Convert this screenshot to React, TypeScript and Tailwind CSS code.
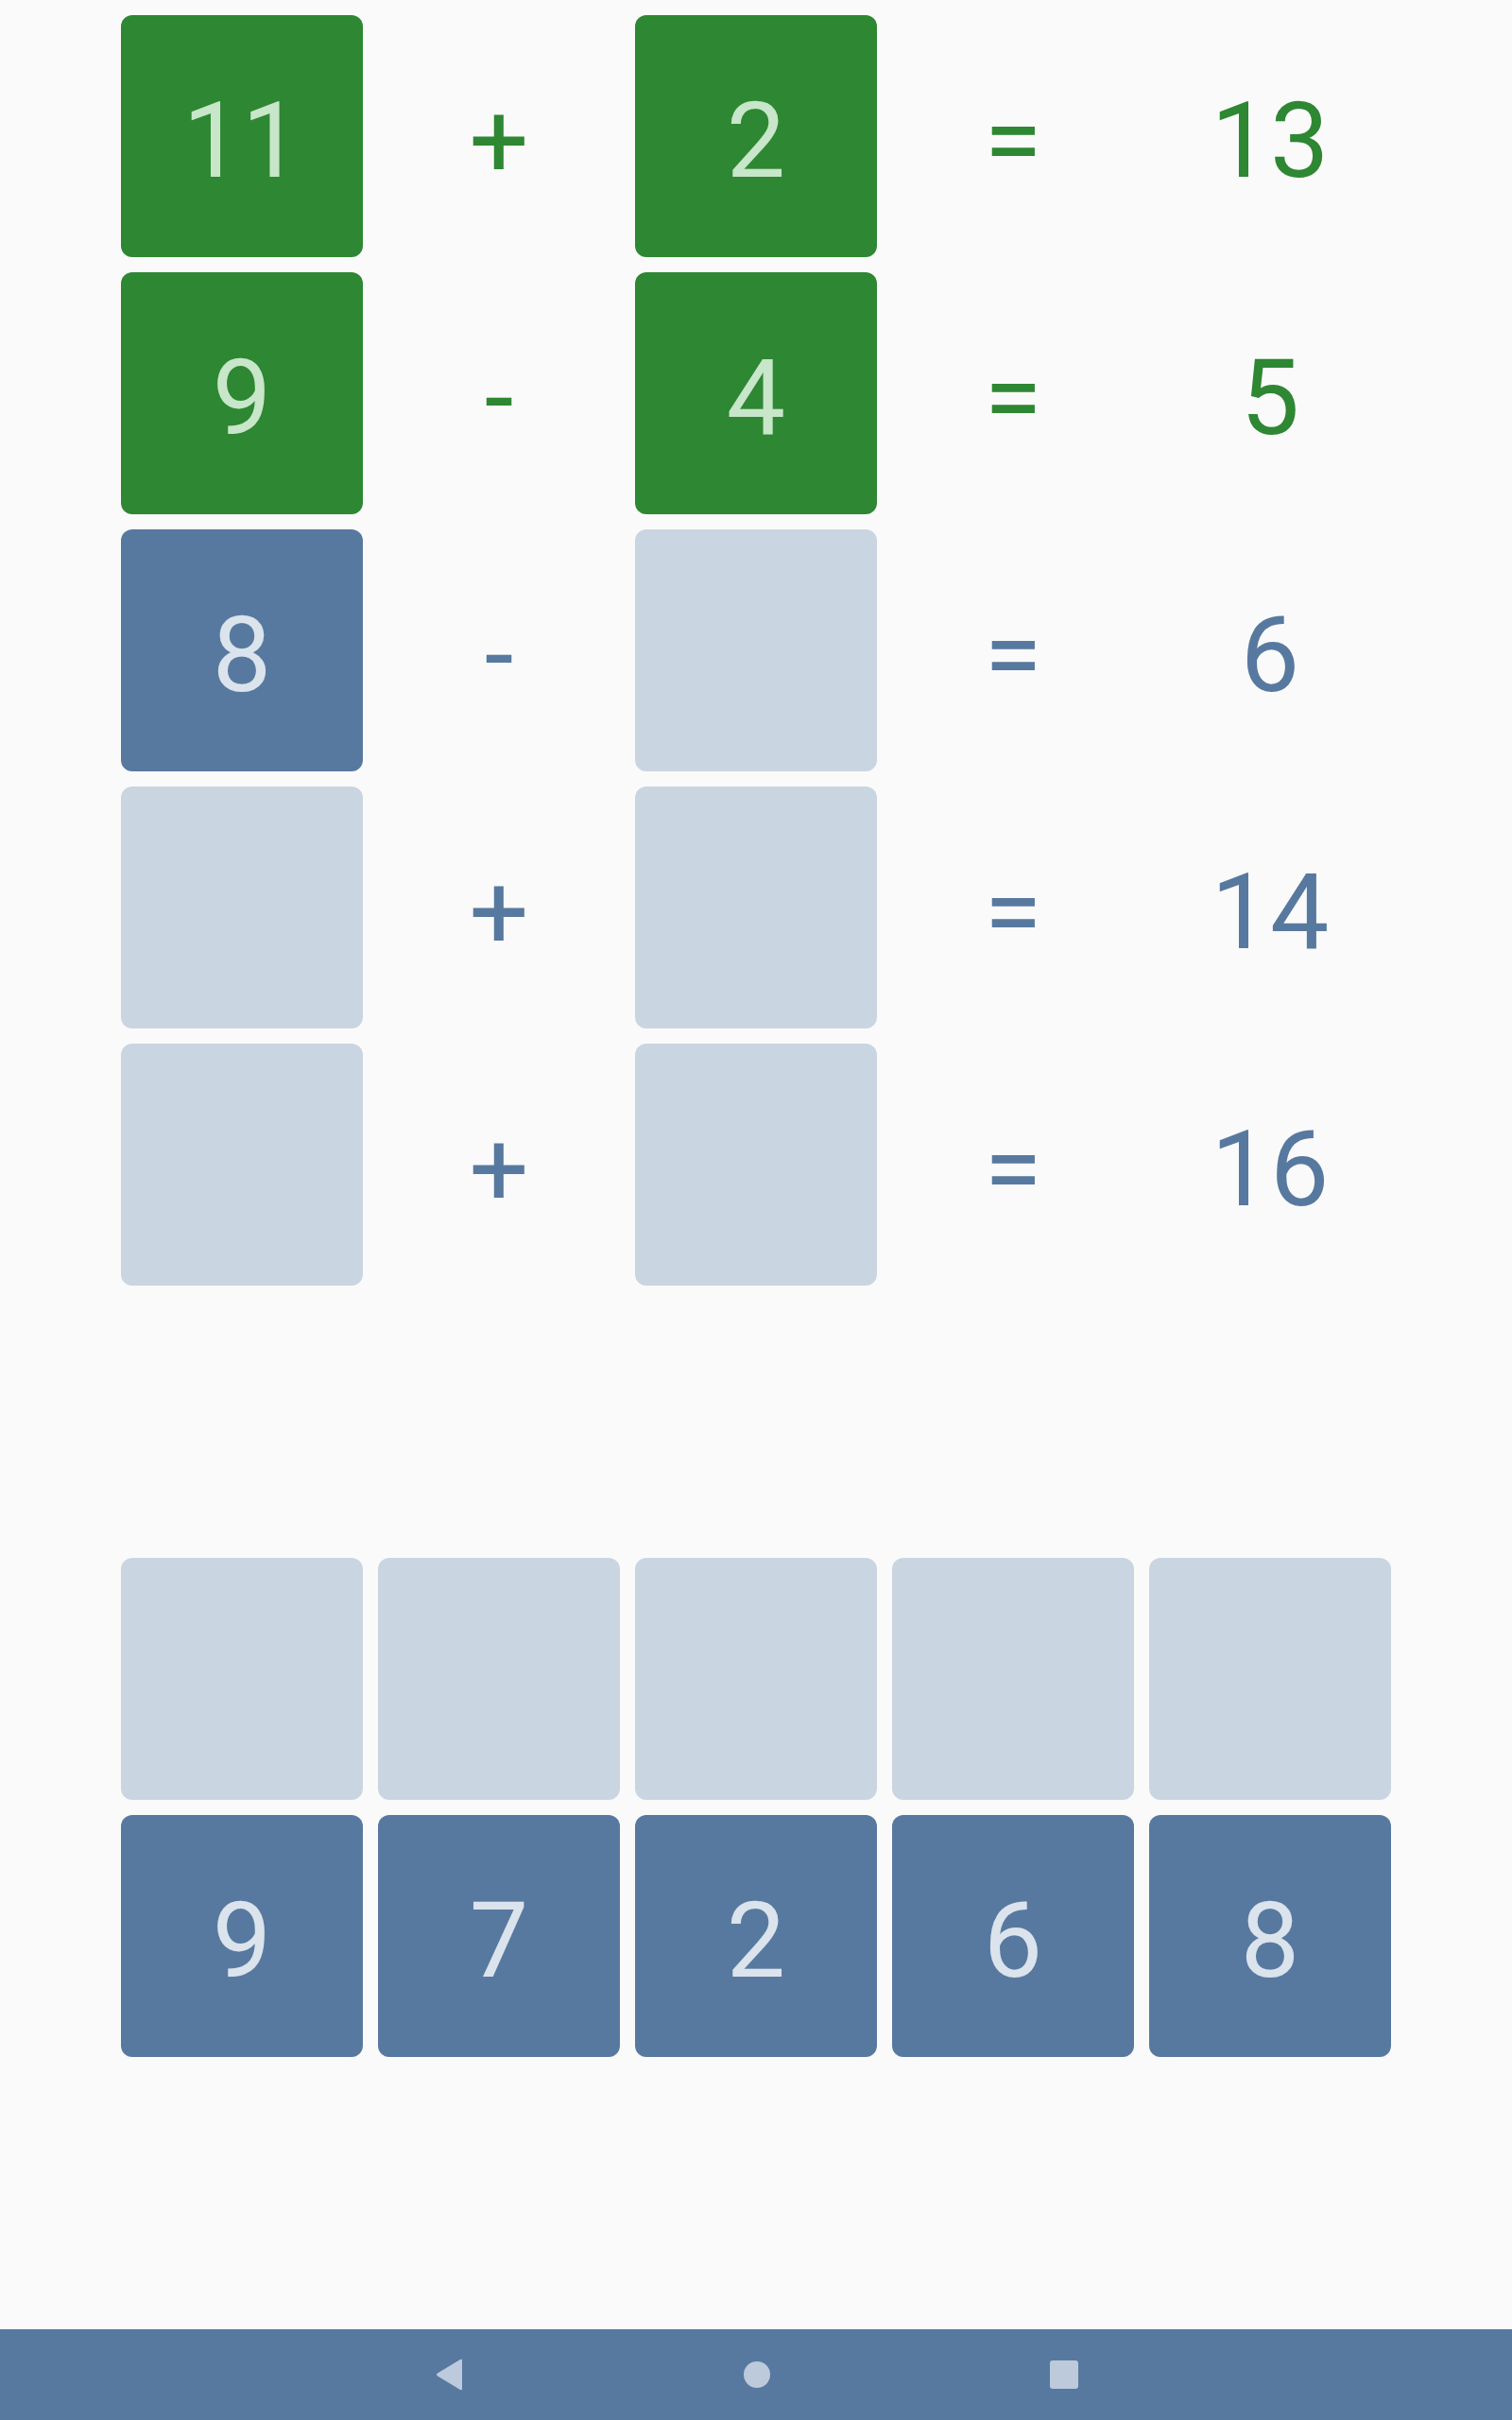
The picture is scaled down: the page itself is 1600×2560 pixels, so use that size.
import type { ReactNode } from "react";

type Cell = { value?: number; tone: "solved" | "filled" | "empty" };

interface Equation {
  a: Cell;
  op: "+" | "-";
  b: Cell;
  result: number;
  solved: boolean;
}

const EQUATIONS: Equation[] = [
  { a: { value: 11, tone: "solved" }, op: "+", b: { value: 2, tone: "solved" }, result: 13, solved: true },
  { a: { value: 9, tone: "solved" }, op: "-", b: { value: 4, tone: "solved" }, result: 5, solved: true },
  { a: { value: 8, tone: "filled" }, op: "-", b: { tone: "empty" }, result: 6, solved: false },
  { a: { tone: "empty" }, op: "+", b: { tone: "empty" }, result: 14, solved: false },
  { a: { tone: "empty" }, op: "+", b: { tone: "empty" }, result: 16, solved: false },
];

const HAND = [9, 7, 2, 6, 8];

function Tile({ cell }: { cell: Cell }) {
  const tone =
    cell.tone === "solved"
      ? "bg-[#2e8732] text-[#c8e6c9]"
      : cell.tone === "filled"
        ? "bg-[#58799f] text-[#dbe3ec]"
        : "bg-[#cad5e2]";
  return (
    <div className={`flex h-[256px] w-[256px] items-center justify-center rounded-[12px] pt-[10px] ${tone}`}>
      {cell.value !== undefined && <span>{cell.value}</span>}
    </div>
  );
}

function Symbol({ children, solved }: { children: ReactNode; solved: boolean }) {
  return (
    <div
      className={`flex h-[256px] w-[256px] items-center justify-center pt-[10px] ${
        solved ? "text-[#2e8732]" : "text-[#58799f]"
      }`}
    >
      {children}
    </div>
  );
}

export default function App() {
  return (
    <div
      className="flex h-[2560px] w-full flex-col bg-[#fafafa] text-[111px] leading-none"
      style={{ fontFamily: "Roboto, 'Noto Sans', sans-serif" }}
    >
      <div className="mx-auto mt-4 grid grid-cols-[repeat(5,256px)] gap-4">
        {EQUATIONS.map((eq, i) => (
          <div key={i} className="contents">
            <Tile cell={eq.a} />
            <Symbol solved={eq.solved}>{eq.op}</Symbol>
            <Tile cell={eq.b} />
            <Symbol solved={eq.solved}>=</Symbol>
            <Symbol solved={eq.solved}>{eq.result}</Symbol>
          </div>
        ))}
      </div>

      <div className="mx-auto mt-[288px] grid grid-cols-[repeat(5,256px)] gap-4">
        {HAND.map((_, i) => (
          <Tile key={`slot-${i}`} cell={{ tone: "empty" }} />
        ))}
        {HAND.map((v, i) => (
          <Tile key={`hand-${i}`} cell={{ value: v, tone: "filled" }} />
        ))}
      </div>

      <nav className="mt-auto flex h-[96px] items-center bg-[#58799f]">
        <div className="flex w-full items-center justify-center gap-[295px]">
          <svg width="32" height="34" viewBox="0 0 32 34">
            <path d="M30 2 L30 32 Q30 34 28 33 L4 18.5 Q2 17 4 15.5 L28 1 Q30 0 30 2 Z" fill="#bccadb" />
          </svg>
          <svg width="30" height="30" viewBox="0 0 30 30">
            <circle cx="15" cy="15" r="14" fill="#bccadb" />
          </svg>
          <svg width="30" height="30" viewBox="0 0 30 30">
            <rect x="0" y="0" width="30" height="30" rx="3" fill="#bccadb" />
          </svg>
        </div>
      </nav>
    </div>
  );
}
